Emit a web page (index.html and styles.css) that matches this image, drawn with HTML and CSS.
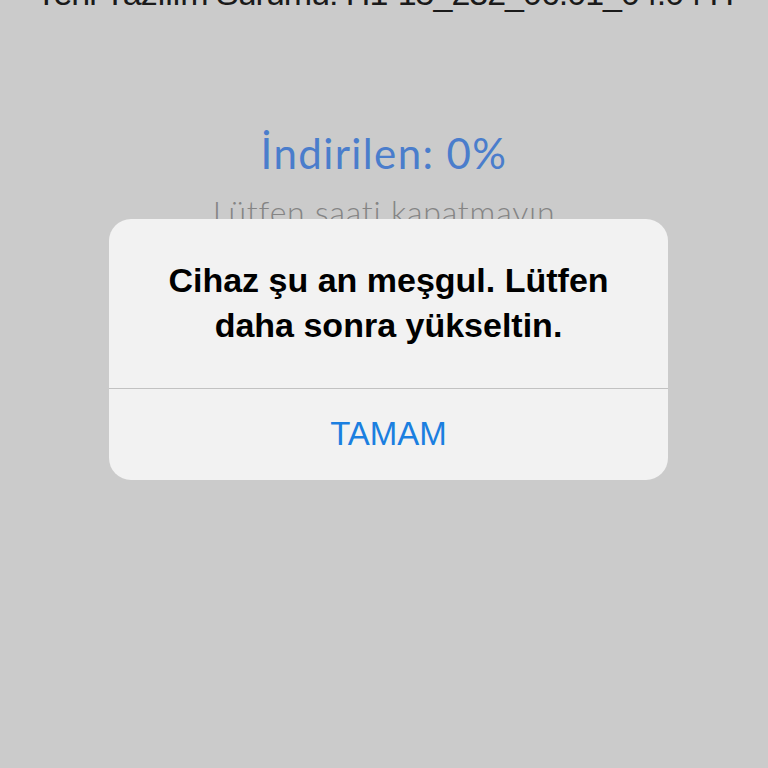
FILE: index.html
```html
<!DOCTYPE html>
<html lang="tr">
<head>
<meta charset="utf-8">
<link rel="stylesheet" href="styles.css">
</head>
<body>
<div class="screen">
  <div class="version">Yeni Yazılım Sürümü: H1-15_232_06.01_04.04 H</div>
  <div class="progress">İndirilen: 0%</div>
  <div class="hint">Lütfen saati kapatmayın</div>
  <div class="alert">
    <div class="alert-msg">Cihaz şu an meşgul. Lütfen<br>daha sonra yükseltin.</div>
    <div class="alert-btn">TAMAM</div>
  </div>
</div>
</body>
</html>
```
FILE: styles.css
```css
html, body {
  margin: 0;
  padding: 0;
  width: 768px;
  height: 768px;
  overflow: hidden;
  background: #cbcbcb;
}
.screen {
  position: relative;
  width: 768px;
  height: 768px;
  display: flex;
  flex-direction: column;
  align-items: center;
}
.version {
  font-family: "Liberation Sans", Arial, sans-serif;
  font-size: 34px;
  line-height: 40px;
  color: #1a1a1a;
  margin-top: -27px;
  white-space: nowrap;
  letter-spacing: -1px;
}
.progress {
  font-family: Lato, "Noto Sans", sans-serif;
  font-weight: 400;
  font-size: 42px;
  line-height: 52px;
  color: #4a7dcc;
  margin-top: 114px;
  letter-spacing: 1.4px;
}
.hint {
  font-family: Lato, "Noto Sans", sans-serif;
  font-weight: 300;
  font-size: 32px;
  line-height: 40px;
  color: #848484;
  margin-top: 13px;
  letter-spacing: 0.8px;
}
.alert {
  position: absolute;
  left: 109px;
  top: 219px;
  width: 559px;
  height: 261px;
  background: #f2f2f2;
  border-radius: 22px;
  display: flex;
  flex-direction: column;
  overflow: hidden;
}
.alert-msg {
  height: 170px;
  box-sizing: border-box;
  padding-top: 39px;
  text-align: center;
  font-family: "Liberation Sans", Arial, sans-serif;
  font-weight: bold;
  font-size: 34px;
  line-height: 45px;
  color: #000;
  border-bottom: 1.5px solid #c2c2c2;
}
.alert-btn {
  flex: 1;
  display: flex;
  align-items: center;
  justify-content: center;
  font-family: "Liberation Sans", Arial, sans-serif;
  font-size: 33px;
  color: #1b7fe0;
  padding-bottom: 2px;
}
```
